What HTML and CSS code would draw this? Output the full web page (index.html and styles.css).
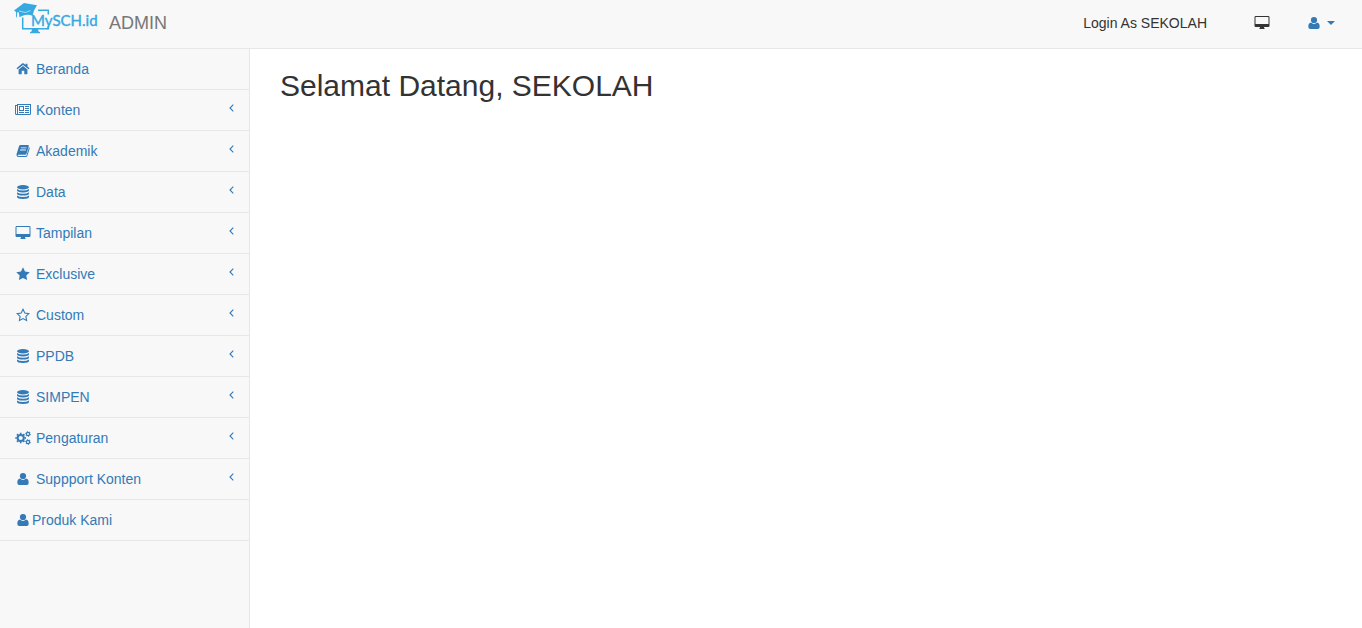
FILE: index.html
```html
<!DOCTYPE html>
<html lang="id">
<head>
  <meta charset="UTF-8">
  <meta name="viewport" content="width=device-width, initial-scale=1.0">
  <title>MySCH.id Admin</title>
  <link rel="stylesheet" href="styles.css">
</head>
<body>
  <!-- Kumpulan ikon -->
  <svg class="sprite" aria-hidden="true">
    <symbol id="home" viewBox="0 0 16 14">
      <path d="M8 4l4.400 3.600v4q0 .6-.6.600H9.300V8.700H6.700v3.500H4.200q-.6 0-.6-.6v-4z"/>
      <path d="M8 1.300q.5 0 .9.300l1.600 1.300V1.800h2v2.700l2 1.700-.9 1.100L8 2.900 2.400 7.300l-.9-1.100 5.600-4.600q.4-.3.900-.3z"/>
    </symbol>
    <symbol id="news" viewBox="0 0 16 14">
      <path fill-rule="evenodd" d="M2 1h14v9.500q0 1.500-1.500 1.500h-13Q0 12 0 10.500V2h2zM1 3v7.500q0 .5.500.5t.5-.5V3zM3 2v8.500l-.1.500h11.600q.5 0 .5-.5V2z"/>
      <path fill-rule="evenodd" d="M4 3h5v5H4zm1 1v3h3V4zM4 9h5v1H4zM10 3h4v1h-4zM10 5h4v1h-4zM10 7h4v1h-4zM10 9h4v1h-4z"/>
    </symbol>
    <symbol id="book" viewBox="0 0 16 14">
      <path fill-rule="evenodd" d="M5.500 1H13q1.100.1.800 1.200L11.500 9.800q-.3.900-1.300.9H3.400q-.7 0-.7.500 0 .8 1.100.8h7q.5 0 .7-.5L14 3.200q1 .4.700 1.400l-2.300 7.200Q12 13 10.800 13H3.700q-1.600 0-2.100-1.500-.2-.6 0-1.400L4 2.200Q4.400 1 5.500 1zM6 3.500l-.3.800h5.700l.3-.8zM5.300 5.600l-.3.800h5.700l.3-.8z"/>
    </symbol>
    <symbol id="database" viewBox="0 0 16 14">
      <ellipse cx="8" cy="2.200" rx="6" ry="2.200"/>
      <path d="M2 4q2 1.500 6 1.500T14 4v1.300q0 2.100-6 2.100t-6-2.100zM2 7.200q2 1.500 6 1.500t6-1.500v1.300q0 2.100-6 2.100t-6-2.100zM2 10.400q2 1.500 6 1.500t6-1.500v1.400Q14 14 8 14t-6-2.200z"/>
    </symbol>
    <symbol id="desktop" viewBox="0 0 16 14">
      <path fill-rule="evenodd" d="M1.200 0h13.100Q15.500 0 15.500 1.200v8.600q0 1.200-1.200 1.200H10q0 .7.500 1.200.4.800-.2.800H5.700q-.6 0-.2-.8Q6 11.700 6 11H1.700Q.5 11 .5 9.800V1.200Q.5 0 1.700 0zM1.500 1.200v6.600q0 .2.300.2h12.400q.3 0 .3-.2V1.200q0-.2-.3-.2H1.800q-.3 0-.3.200z"/>
    </symbol>
    <symbol id="star" viewBox="0 0 16 14">
      <path d="M8 .3l2 4.200 4.700.7-3.400 3.300.8 4.600L8 10.900l-4.100 2.200.8-4.600-3.400-3.300 4.700-.7z"/>
    </symbol>
    <symbol id="star-o" viewBox="0 0 16 14">
      <path class="line" d="M8 1.300l1.800 3.700 4 .6-2.900 2.800.7 4L8 10.500l-3.600 1.900.7-4-2.900-2.800 4-.6z"/>
    </symbol>
    <symbol id="cogs" viewBox="0 0 16 14">
      <circle class="ring" cx="5.700" cy="7" r="3.100"/>
      <circle class="teeth" cx="5.700" cy="7" r="4.600" pathLength="48"/>
      <circle class="ring-sm" cx="13" cy="3" r="1.600"/>
      <circle class="teeth-sm" cx="13" cy="3" r="2.400" pathLength="36"/>
      <circle class="ring-sm" cx="13" cy="11" r="1.600"/>
      <circle class="teeth-sm" cx="13" cy="11" r="2.400" pathLength="36"/>
    </symbol>
    <symbol id="user" viewBox="0 0 16 14">
      <circle cx="8" cy="4" r="3.100"/>
      <path d="M5 6.500Q6.300 7.900 8 7.900t3-1.400q2.700.3 2.700 4.300 0 2.200-2 2.200H4.300q-2 0-2-2.200 0-4 2.700-4.300z"/>
    </symbol>
    <symbol id="angle" viewBox="0 0 5 8">
      <path class="line" d="M4.300.700L1 4l3.300 3.300"/>
    </symbol>
    <symbol id="caret" viewBox="0 0 8 4">
      <path d="M0 0h8L4 4z"/>
    </symbol>
  </svg>

  <!-- Navbar atas -->
  <header class="navbar">
    <a class="brand" href="#">
      <svg class="logo" viewBox="0 0 86 32" role="img" aria-label="MySCH.id">
        <path d="M0 7.500L10 0l13 2.300-3 5.200-1.500 5.400q-2.500-1.600-7.500-.9-3.200.8-5.500 2.200l-.700-4.700-1.600-.3-.2 3.800-1 2.500.1-6.500z"/>
        <path class="screen" d="M8.700 14.500v11.200h25.600V23M24 7.300h10.300v4.200"/>
        <path d="M18 26h6l.3 2.300 1.700.9v1H16v-1l1.700-.9z"/>
        <path class="fold" d="M5 8l6.500 1.500 5-2"/>
        <text x="17" y="23">MySCH.id</text>
      </svg>
      <span>ADMIN</span>
    </a>
    <div class="top-links">
      <span>Login As SEKOLAH</span>
      <a class="site-link" href="#" aria-label="Lihat situs"><svg class="icon"><use href="#desktop"/></svg></a>
      <button class="user-menu" type="button" aria-label="Menu pengguna"><svg class="icon"><use href="#user"/></svg><svg class="caret"><use href="#caret"/></svg></button>
    </div>
  </header>

  <div class="wrapper">
    <!-- Menu samping -->
    <nav class="sidebar">
      <ul>
        <li><a href="#"><svg class="icon"><use href="#home"/></svg>Beranda</a></li>
        <li><a href="#"><svg class="icon"><use href="#news"/></svg>Konten<svg class="arrow"><use href="#angle"/></svg></a></li>
        <li><a href="#"><svg class="icon"><use href="#book"/></svg>Akademik<svg class="arrow"><use href="#angle"/></svg></a></li>
        <li><a href="#"><svg class="icon"><use href="#database"/></svg>Data<svg class="arrow"><use href="#angle"/></svg></a></li>
        <li><a href="#"><svg class="icon"><use href="#desktop"/></svg>Tampilan<svg class="arrow"><use href="#angle"/></svg></a></li>
        <li><a href="#"><svg class="icon"><use href="#star"/></svg>Exclusive<svg class="arrow"><use href="#angle"/></svg></a></li>
        <li><a href="#"><svg class="icon"><use href="#star-o"/></svg>Custom<svg class="arrow"><use href="#angle"/></svg></a></li>
        <li><a href="#"><svg class="icon"><use href="#database"/></svg>PPDB<svg class="arrow"><use href="#angle"/></svg></a></li>
        <li><a href="#"><svg class="icon"><use href="#database"/></svg>SIMPEN<svg class="arrow"><use href="#angle"/></svg></a></li>
        <li><a href="#"><svg class="icon"><use href="#cogs"/></svg>Pengaturan<svg class="arrow"><use href="#angle"/></svg></a></li>
        <li><a href="#"><svg class="icon"><use href="#user"/></svg>Suppport Konten<svg class="arrow"><use href="#angle"/></svg></a></li>
        <li><a class="tight" href="#"><svg class="icon"><use href="#user"/></svg>Produk Kami</a></li>
      </ul>
    </nav>

    <main class="content">
      <h1>Selamat Datang, SEKOLAH</h1>
    </main>
  </div>
</body>
</html>
```
FILE: styles.css
```css
* {
  box-sizing: border-box;
}

body {
  margin: 0;
  min-height: 100vh;
  display: flex;
  flex-direction: column;
  background-color: #f8f8f8;
  color: #333;
  font-family: "Liberation Sans", Arial, sans-serif;
  font-size: 14px;
  line-height: 20px;
}

a {
  color: #337ab7;
  text-decoration: none;
}

.sprite {
  display: none;
}

.icon {
  width: 16px;
  height: 14px;
  flex: none;
  fill: currentColor;
}

/* Ikon garis */
.line {
  fill: none;
  stroke: currentColor;
  stroke-width: 1.1;
}

.ring {
  fill: none;
  stroke: currentColor;
  stroke-width: 2;
}

.teeth {
  fill: none;
  stroke: currentColor;
  stroke-width: 1.4;
  stroke-dasharray: 3 3;
  stroke-dashoffset: 1.5;
}

.ring-sm {
  fill: none;
  stroke: currentColor;
  stroke-width: 1.2;
}

.teeth-sm {
  fill: none;
  stroke: currentColor;
  stroke-width: 1;
  stroke-dasharray: 3 3;
}

/* Navbar */
.navbar {
  display: flex;
  justify-content: space-between;
  align-items: flex-start;
  height: 49px;
  border-bottom: 1px solid #e7e7e7;
}

.brand {
  display: flex;
  gap: 9px;
  padding: 3px 0 0 14px;
  color: #777;
  font-size: 18px;
}

.brand span {
  padding-top: 10px;
}

.logo {
  width: 86px;
  height: 32px;
  fill: #36a9e1;
}

.logo text {
  font-family: Lato, sans-serif;
  font-size: 15px;
  stroke: #36a9e1;
  stroke-width: .4;
}

.logo .screen {
  fill: none;
  stroke: #36a9e1;
  stroke-width: 1.5;
}

.logo .fold {
  fill: none;
  stroke: #f8f8f8;
  stroke-width: .6;
}

.top-links {
  display: flex;
  align-items: center;
  padding: 13px 27px 0 0;
}

.site-link {
  display: flex;
  margin: 0 36px 0 47px;
  color: #333;
}

.user-menu {
  display: flex;
  align-items: center;
  gap: 5px;
  padding: 0;
  border: 0;
  background: none;
  color: #337ab7;
  cursor: pointer;
}

.caret {
  width: 8px;
  height: 4px;
  fill: currentColor;
}

/* Menu samping */
.wrapper {
  flex: 1;
  display: flex;
}

.sidebar {
  width: 250px;
  flex: none;
  border-right: 1px solid #e7e7e7;
}

.sidebar ul {
  list-style: none;
  margin: 0;
  padding: 0;
}

.sidebar li {
  border-bottom: 1px solid #e7e7e7;
}

.sidebar a {
  display: flex;
  align-items: center;
  gap: 5px;
  padding: 10px 15px;
}

.sidebar a:hover {
  background-color: #eee;
}

.sidebar .tight {
  gap: 1px;
}

.arrow {
  width: 5px;
  height: 8px;
  margin: 0 0 5px auto;
}

/* Isi halaman */
.content {
  flex: 1;
  padding: 0 30px;
  background-color: #fff;
}

h1 {
  margin: 20px 0 10px;
  font-size: 30px;
  font-weight: 500;
  line-height: 33px;
}
```
